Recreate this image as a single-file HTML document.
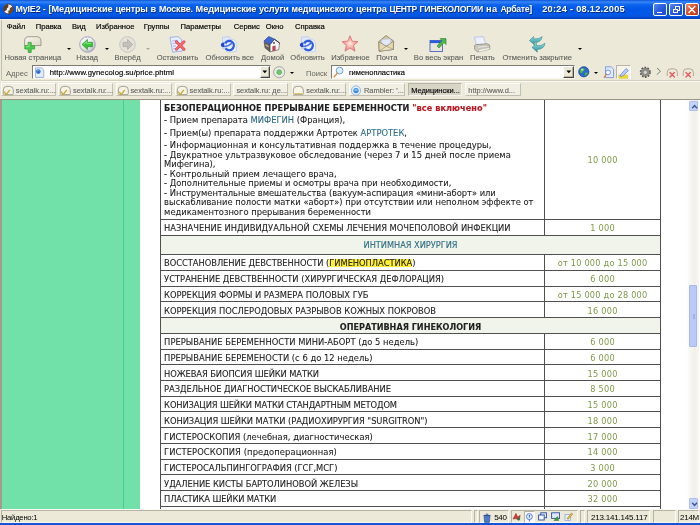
<!DOCTYPE html><html><head><meta charset="utf-8"><title>MyIE2</title><style>
html,body{margin:0;padding:0;}
body{width:700px;height:525px;overflow:hidden;background:#ece9d8;}
#win{filter:opacity(1);position:relative;width:700px;height:525px;overflow:hidden;background:#ece9d8;font-family:"Liberation Sans", sans-serif;font-size:7.6px;color:#000;}
#win div, #win span, #win svg{position:absolute;}
.t{white-space:nowrap;line-height:10px;height:10px;}
#title{left:0;top:0;width:700px;height:18.5px;background:linear-gradient(to bottom,#0a4fd0 0%,#2a78f0 6%,#2f80f5 13%,#0c64ec 25%,#0058e8 45%,#0358e6 78%,#0450da 90%,#0038b0 100%);}
#title .tt{left:15.4px;top:4.1px;font-weight:bold;font-size:9.2px;color:#fff;line-height:11px;height:11px;white-space:pre;text-shadow:0.7px 0.7px 0 #0a2a7a;font-family:"Liberation Sans",sans-serif;}
.wb{top:3px;height:12.6px;width:13.4px;border:0.8px solid #fff;border-radius:2px;box-sizing:border-box;background:linear-gradient(135deg,#5a8af0 0%,#2a5fe0 45%,#1c48c8 100%);}
.wb.x{background:linear-gradient(135deg,#f0906a 0%,#d8502a 45%,#b8381a 100%);}
.menu{top:21.5px;color:#000;font-size:7.6px;-webkit-text-stroke:0.18px #000;}
.lbl{top:53px;color:#5e5e5a;-webkit-text-stroke:0.1px #5e5e5a;text-align:center;font-size:7.6px;}
.arr{width:0;height:0;border-left:2px solid transparent;border-right:2px solid transparent;border-top:2.2px solid #000;}
.inp{background:#fff;border-top:1px solid #7b7b74;border-left:1px solid #7b7b74;border-bottom:1px solid #f6f5ee;border-right:1px solid #f6f5ee;box-sizing:border-box;}
.dd{background:#ece9d8;border:1px solid #fff;border-right-color:#48463e;border-bottom-color:#48463e;box-sizing:border-box;box-shadow:inset -0.8px -0.8px 0 #a8a594;}
.tab{top:83.4px;height:13px;box-sizing:border-box;background:#f1efe4;border-top:1px solid #fdfdfa;border-left:1px solid #fdfdfa;border-right:1px solid #c2bfae;border-bottom:1px solid #c2bfae;}
.tab.act{background:#d8d4c6;border-color:#b9b5a4 #f4f2ea #f4f2ea #b9b5a4;}
.tab .t{top:1.2px;color:#62625e;font-size:7.45px;-webkit-text-stroke:0.1px #62625e;}
.tab.act .t{color:#000;-webkit-text-stroke:0.15px #000;}
#content{left:0px;top:98.6px;width:700px;height:410.6px;background:#fff;overflow:hidden;border-top:1px solid #9c9586;border-left:2px solid #a39c8e;box-sizing:border-box;}
.hl{height:1px;background:#505050;left:159.7px;width:500px;}
.vl{width:1px;background:#505050;top:0;}
.c{font-family:"DejaVu Sans", "Liberation Sans", sans-serif;font-size:8.35px;white-space:nowrap;line-height:10px;height:10px;color:#202020;-webkit-text-stroke:0.08px #202020;}
.c b{font-size:8.2px;}
.p{font-family:"DejaVu Sans", "Liberation Sans", sans-serif;font-size:8.2px;white-space:nowrap;line-height:10px;height:10px;color:#80994a;left:542.6px;width:116px;text-align:center;letter-spacing:0.22px;}
.sp{top:510.2px;height:13.2px;border-left:1px solid #b6b3a2;border-top:1px solid #b6b3a2;border-right:1px solid #faf9f3;border-bottom:1px solid #faf9f3;box-sizing:border-box;}
</style></head><body><div id="win">
<div id="title">
<svg style="left:2.5px;top:3px" width="11" height="12" viewBox="0 0 11 12"><circle cx="5.3" cy="6" r="5" fill="#f4efe6" stroke="#3a2a1a" stroke-width="0.8"/><path d="M5.3 1 A5 5 0 0 0 1.2 8.5 L5.3 6 Z" fill="#5a3a20"/><path d="M5.3 11 A5 5 0 0 0 9.6 3.6 L5.3 6 Z" fill="#6a4a2a"/><circle cx="5.3" cy="6" r="1.6" fill="#fff"/></svg>
<div class="tt" id="tt0" style="left:15.4px;letter-spacing:-0.111px;font-size:8.9px">MyIE2 -</div>
<div class="tt" id="tt1" style="left:48.5px;letter-spacing:-0.044px;font-size:9.2px">[Медицинские</div>
<div class="tt" id="tt2" style="left:115.4px;letter-spacing:-0.135px;font-size:8.9px">центры</div>
<div class="tt" id="tt3" style="left:150.5px;letter-spacing:-0.056px;font-size:9.2px">в</div>
<div class="tt" id="tt4" style="left:158.9px;letter-spacing:-0.133px;font-size:8.9px">Москве.</div>
<div class="tt" id="tt5" style="left:195.6px;letter-spacing:-0.078px;font-size:9.2px">Медицинские</div>
<div class="tt" id="tt6" style="left:259.1px;letter-spacing:-0.116px;font-size:9.2px">услуги</div>
<div class="tt" id="tt7" style="left:291.5px;letter-spacing:-0.071px;font-size:8.9px">медицинского</div>
<div class="tt" id="tt8" style="left:356.0px;letter-spacing:-0.139px;font-size:9.2px">центра</div>
<div class="tt" id="tt9" style="left:389.5px;letter-spacing:-0.318px;font-size:8.5px">ЦЕНТР</div>
<div class="tt" id="tt10" style="left:419.6px;letter-spacing:-0.160px;font-size:8.7px">ГИНЕКОЛОГИИ</div>
<div class="tt" id="tt11" style="left:486.0px;letter-spacing:0.464px;font-size:9.2px">на</div>
<div class="tt" id="tt12" style="left:500.4px;letter-spacing:-0.338px;font-size:8.7px">Арбате]</div>
<div class="tt" id="tt13" style="left:542.2px;letter-spacing:0.286px;font-size:9.2px">20:24 - 08.12.2005</div>
<div class="wb" style="left:653.3px"><div style="left:3px;top:7.6px;width:4.6px;height:1.8px;background:#fff"></div></div>
<div class="wb" style="left:669.4px"><div style="left:4.6px;top:2.4px;width:4.6px;height:4.2px;border:0.9px solid #fff;border-top-width:1.4px;box-sizing:border-box"></div><div style="left:2.6px;top:4.6px;width:4.8px;height:4.4px;border:0.9px solid #fff;border-top-width:1.4px;box-sizing:border-box;background:#2a58d8"></div></div>
<div class="wb x" style="left:685.3px"><svg style="left:0;top:0" width="12" height="11" viewBox="0 0 12 11"><path d="M3 2.4 L8.8 8.4 M8.8 2.4 L3 8.4" stroke="#fff" stroke-width="1.5" stroke-linecap="round"/></svg></div>
</div>
<div style="left:0.8px;top:19.4px;width:0.9px;height:61.4px;background:#c2beae"></div>
<div style="left:0;top:18.5px;width:700px;height:1px;background:#f6f4ea"></div>
<div class="t menu" style="left:6.8px">Файл</div>
<div class="t menu" style="left:35.8px">Правка</div>
<div class="t menu" style="left:72px">Вид</div>
<div class="t menu" style="left:96px">Избранное</div>
<div class="t menu" style="left:143.8px">Группы</div>
<div class="t menu" style="left:180.6px">Параметры</div>
<div class="t menu" style="left:233.8px">Сервис</div>
<div class="t menu" style="left:265.8px">Окно</div>
<div class="t menu" style="left:295px">Справка</div>
<svg style="left:23.8px;top:35.5px" width="18" height="17" viewBox="0 0 18 17"><defs><linearGradient id="gnp" x1="0" y1="0" x2="1" y2="1"><stop offset="0" stop-color="#f8f6ee"/><stop offset="1" stop-color="#dcd7c4"/></linearGradient></defs><path d="M0.6 9.6 V5 Q0.6 0.7 5 0.7 H12.6 Q17 0.7 17 5 V9.6 Z" fill="url(#gnp)" stroke="#8e8a78" stroke-width="0.8"/><path d="M4.2 6.4 V9.8 H0.8 V13 H4.2 V16.4 H7.2 V13 H10.6 V9.8 H7.2 V6.4 Z" fill="#48cc48" stroke="#2c9a30" stroke-width="0.7" stroke-linejoin="round"/><path d="M5 7.6 V10.6 H2" fill="none" stroke="#9bea96" stroke-width="0.8"/></svg>
<div class="t lbl" style="left:-12.1px;width:90px">Новая страница</div>
<div class="arr" style="left:66.6px;top:47.8px;border-top-color:#000"></div>
<svg style="left:78.6px;top:35.6px" width="17" height="17" viewBox="0 0 17 17"><defs><radialGradient id="gb" cx="0.4" cy="0.35" r="0.7"><stop offset="0" stop-color="#fff"/><stop offset="0.6" stop-color="#e8e8e8"/><stop offset="1" stop-color="#a8a8b0"/></radialGradient></defs><circle cx="8.5" cy="8.5" r="7.8" fill="url(#gb)" stroke="#a4a4c4" stroke-width="1"/><path d="M3 8.5 L8.4 3.4 V6.3 H13.4 V10.7 H8.4 V13.6 Z" fill="#3ec43c" stroke="#249428" stroke-width="0.7" stroke-linejoin="round"/><path d="M4.6 8.3 L7.6 5.4 V7.4 H12" fill="none" stroke="#8fe88a" stroke-width="0.9"/></svg>
<div class="t lbl" style="left:42.2px;width:90px">Назад</div>
<div class="arr" style="left:104.9px;top:47.8px;border-top-color:#000"></div>
<svg style="left:118.8px;top:35.6px" width="17" height="17" viewBox="0 0 17 17"><circle cx="8.5" cy="8.5" r="7.8" fill="#e4e2da" stroke="#c4c2b8" stroke-width="0.9"/><path d="M13.8 8.5 L8.6 3.6 V6.4 H4 V10.6 H8.6 V13.4 Z" fill="#c2c0b8" stroke="#aaa89e" stroke-width="0.7"/></svg>
<div class="t lbl" style="left:82.6px;width:90px">Вперёд</div>
<div class="arr" style="left:146.0px;top:47.5px;border-top-color:#aaa79a"></div>
<svg style="left:169.0px;top:35.5px" width="18" height="17" viewBox="0 0 18 17"><path d="M1 1.4 L9 0.6 L12.6 3.6 L13.4 15 L3.6 16.2 Z" fill="#e6edfc" stroke="#8ea6e4" stroke-width="0.8"/><path d="M3 5 L9 4.4 M3.4 7.6 L8 7.2 M3.8 10.2 L7 9.9 M4 12.8 L8 12.4" stroke="#9ab2ec" stroke-width="0.8"/><path d="M7.4 5.8 L15 13.2 M15 5.8 L7.4 13.2" stroke="#d84858" stroke-width="3" stroke-linecap="round"/><path d="M7.4 5.8 L15 13.2 M15 5.8 L7.4 13.2" stroke="#f46a6a" stroke-width="1.7" stroke-linecap="round"/></svg>
<div class="t lbl" style="left:132.4px;width:90px">Остановить</div>
<svg style="left:220.4px;top:35.5px" width="18" height="17" viewBox="0 0 18 17"><path d="M2.4 1.2 L9 0.6 L11.4 3 L11.4 12 L2.4 12.6 Z" fill="#dde6fb" stroke="#a9bdf0" stroke-width="0.6"/><path d="M6.6 4 L13.6 3.4 L16.4 6 L16.4 15.6 L6.6 16.2 Z" fill="#eaf0fe" stroke="#b4c6f2" stroke-width="0.6"/><circle cx="9.2" cy="9.6" r="4.6" fill="none" stroke="#2f5bdc" stroke-width="2.3" stroke-dasharray="23 6" transform="rotate(-150 9.2 9.6)"/><path d="M0.8 9.6 Q0.8 6.2 4.6 6.6 Q3.6 8.8 5 10.8 Q2.2 12.2 0.8 9.6 Z" fill="#2446cc"/><path d="M4.4 10.6 Q8.6 10.4 12.6 6.6" fill="none" stroke="#4d78ea" stroke-width="1.5"/></svg>
<div class="t lbl" style="left:184.8px;width:90px">Обновить все</div>
<svg style="left:263.0px;top:35.5px" width="18" height="17" viewBox="0 0 18 17"><path d="M1.1 5.7 L7.1 8.8 L7.1 15.9 L2 11.9 Z" fill="#6a6258" stroke="#3a3630" stroke-width="0.5"/><path d="M11.4 3.4 L16.6 7.1 L15.7 13.7 L7.1 15.9 L7.1 8.5 Z" fill="#fbfaf6" stroke="#4a463e" stroke-width="0.6"/><path d="M0.9 5.1 L5.7 0.4 L11.4 3.1 L7.1 8.5 Z" fill="#3f68d2" stroke="#2a3f8e" stroke-width="0.6"/><path d="M11.4 3.1 L16.8 7.2" stroke="#2a2f48" stroke-width="1"/><path d="M9.4 10.2 L12.6 9.6 L12.6 14.4 L9.4 15.2 Z" fill="#c2405a"/><rect x="10.2" y="6.2" width="1.6" height="1.5" fill="#2a2a30"/><path d="M2.6 8 L5.6 9.8 L5.6 11.6 L2.6 9.8 Z" fill="#b8b4a4"/></svg>
<div class="t lbl" style="left:227.6px;width:90px">Домой</div>
<svg style="left:299.0px;top:35.5px" width="18" height="17" viewBox="0 0 18 17"><path d="M2.4 1.2 L9 0.6 L11.4 3 L11.4 12 L2.4 12.6 Z" fill="#dde6fb" stroke="#a9bdf0" stroke-width="0.6"/><path d="M6.6 4 L13.6 3.4 L16.4 6 L16.4 15.6 L6.6 16.2 Z" fill="#eaf0fe" stroke="#b4c6f2" stroke-width="0.6"/><circle cx="9.2" cy="9.6" r="4.6" fill="none" stroke="#2f5bdc" stroke-width="2.3" stroke-dasharray="23 6" transform="rotate(-150 9.2 9.6)"/><path d="M0.8 9.6 Q0.8 6.2 4.6 6.6 Q3.6 8.8 5 10.8 Q2.2 12.2 0.8 9.6 Z" fill="#2446cc"/><path d="M4.4 10.6 Q8.6 10.4 12.6 6.6" fill="none" stroke="#4d78ea" stroke-width="1.5"/></svg>
<div class="t lbl" style="left:262.5px;width:90px">Обновить</div>
<svg style="left:341.4px;top:35.4px" width="18" height="17" viewBox="0 0 18 17"><defs><radialGradient id="gst" cx="0.5" cy="0.5" r="0.55"><stop offset="0" stop-color="#fdeee6"/><stop offset="0.45" stop-color="#f6b4aa"/><stop offset="1" stop-color="#ea7c80"/></radialGradient></defs><path d="M9 0.8 L11.3 6.2 L17 6.6 L12.6 10.4 L14 16.2 L9 13.1 L4 16.2 L5.4 10.4 L1 6.6 L6.7 6.2 Z" fill="url(#gst)" stroke="#e27880" stroke-width="0.9" stroke-linejoin="round"/></svg>
<div class="t lbl" style="left:305.5px;width:90px">Избранное</div>
<svg style="left:377.5px;top:35.4px" width="18" height="17" viewBox="0 0 18 17"><path d="M0.8 6.6 L8 0.5 L15.6 6 L15.4 14.4 L1.2 16.2 Z" fill="#d6c9a0" stroke="#857c64" stroke-width="0.8" stroke-linejoin="round"/><path d="M3.6 4.6 L12.6 3.8 L13 10 L4 10.6 Z" fill="#e2e8fc" stroke="#a8b6e4" stroke-width="0.5"/><path d="M0.9 6.8 L8.4 11.4 L15.5 6.2 L15.4 14.4 L1.2 16.2 Z" fill="#e6d8b0" stroke="#857c64" stroke-width="0.7" stroke-linejoin="round"/><path d="M1.2 16.2 L8.4 11.4 L15.4 14.4 Z" fill="#f0e4c6" stroke="#857c64" stroke-width="0.5"/></svg>
<div class="t lbl" style="left:341.9px;width:90px">Почта</div>
<div class="arr" style="left:404.0px;top:47.8px;border-top-color:#000"></div>
<svg style="left:428.6px;top:35.5px" width="18" height="17" viewBox="0 0 18 17"><rect x="1" y="4.5" width="12.5" height="11" fill="#e8e6dc" stroke="#4a66b8" stroke-width="0.9"/><rect x="1" y="4.5" width="12.5" height="2.6" fill="#2a5ad8"/><path d="M8 10 L13 4.6 L11 2.6 H17 V8.6 L15 6.6 L10 12 Z" fill="#4cb84a" stroke="#2a7a2e" stroke-width="0.6"/></svg>
<div class="t lbl" style="left:393.5px;width:90px">Во весь экран</div>
<svg style="left:473.2px;top:35.5px" width="18" height="17" viewBox="0 0 18 17"><path d="M1.1 1.1 L10.5 0.5 L13.1 8.2 L3.1 8.8 Z" fill="#dfe3fb" stroke="#b4bce4" stroke-width="0.6"/><path d="M3.2 2.4 L9.6 2 L11.6 7.4 L4.6 7.8 Z" fill="#eef1ff"/><path d="M1.6 9.4 L3.4 8.6 L14.2 7.8 L16.6 9 L16.8 13 L4.6 15.8 L1.8 13.6 Z" fill="#d0cfbf" stroke="#7e7d6c" stroke-width="0.7" stroke-linejoin="round"/><path d="M4.4 10.4 L14.8 9.4 L14.8 11 L4.6 12.2 Z" fill="#eef0f6" stroke="#9a9a8c" stroke-width="0.4"/><path d="M5.2 13.8 L16 11.6 L17 13.2 L6.4 16 Z" fill="#f8f8f4" stroke="#a6a596" stroke-width="0.5"/></svg>
<div class="t lbl" style="left:437.4px;width:90px">Печать</div>
<svg style="left:528.6px;top:35.5px" width="18" height="17" viewBox="0 0 18 17"><defs><linearGradient id="gun" x1="0" y1="0" x2="0" y2="1"><stop offset="0" stop-color="#8adada"/><stop offset="1" stop-color="#2e8e9a"/></linearGradient></defs><path d="M0.4 4.6 L4.6 0.4 L4.8 2.8 Q10 3.4 13.2 0.6 Q12.6 6.4 5.2 6.8 L5.6 9 Z" fill="url(#gun)" stroke="#2a8088" stroke-width="0.5"/><path d="M3 11.4 L7.4 7.2 L7.6 9.6 Q12.6 10.2 16 7.2 Q15.4 13.2 8 13.6 L8.4 16.2 Z" fill="url(#gun)" stroke="#2a8088" stroke-width="0.5"/></svg>
<div class="t lbl" style="left:492.2px;width:90px">Отменить закрытие</div>
<div class="arr" style="left:578.0px;top:47.8px;border-top-color:#000"></div>
<div class="t" style="left:6px;top:69.2px;color:#66665f">Адрес</div>
<div class="inp" style="left:32.2px;top:65.2px;width:238.6px;height:13.6px"></div>
<svg style="left:33.6px;top:66.6px" width="11" height="11" viewBox="0 0 11 11"><path d="M1.5 0.8 H7.5 L9.8 3 V10.4 H1.5 Z" fill="#e6eefc" stroke="#7a96d8" stroke-width="0.7"/><circle cx="4.3" cy="4.6" r="2.3" fill="#2a6ad8"/><path d="M3 4 Q4.3 2.8 5.6 4" stroke="#9cf" stroke-width="0.7" fill="none"/></svg>
<div class="t" id="url" style="left:49.7px;top:67.8px;font-size:7.7px;color:#000;-webkit-text-stroke:0.15px #000;letter-spacing:0.047px">http://www.gynecolog.su/price.phtml</div>
<div class="dd" style="left:259.6px;top:66.2px;width:10.4px;height:11.6px"><svg style="left:1.4px;top:3.2px" width="6" height="4" viewBox="0 0 6 4"><path d="M0.4 0.4 H5.2 L2.8 3.2 Z" fill="#000"/></svg></div>
<svg style="left:273.4px;top:66.2px" width="12.4" height="12.4" viewBox="0 0 12.4 12.4"><circle cx="6.2" cy="6.2" r="5.6" fill="#e8e8e4" stroke="#a2a29c" stroke-width="0.9"/><circle cx="6.2" cy="6.2" r="2.4" fill="#6cc868" stroke="#4aa44c" stroke-width="0.6"/></svg>
<div class="arr" style="left:290.2px;top:71.6px;border-top-color:#000"></div>
<div class="t" style="left:306px;top:69.2px;color:#66665f">Поиск</div>
<div class="inp" style="left:331.4px;top:65.2px;width:243.2px;height:13.6px"></div>
<svg style="left:333.0px;top:66.4px" width="12" height="12" viewBox="0 0 12 12"><circle cx="6.6" cy="4.6" r="3.4" fill="#dff0fc" stroke="#6aa4e0" stroke-width="1"/><path d="M4.2 7.2 L1.2 10.8" stroke="#d89a4a" stroke-width="1.6" stroke-linecap="round"/></svg>
<div class="t" id="srch" style="left:348.9px;top:68px;font-size:7.5px;color:#000;-webkit-text-stroke:0.15px #000;letter-spacing:-0.012px">гименопластика</div>
<div class="dd" style="left:563.4px;top:66.2px;width:10.4px;height:11.6px"><svg style="left:1.4px;top:3.2px" width="6" height="4" viewBox="0 0 6 4"><path d="M0.4 0.4 H5.2 L2.8 3.2 Z" fill="#000"/></svg></div>
<svg style="left:578.0px;top:66.4px" width="11.6" height="11.6" viewBox="0 0 11.6 11.6"><circle cx="5.8" cy="5.8" r="5.1" fill="#2a6ad0" stroke="#1a3a8a" stroke-width="0.7"/><path d="M2 4 Q4 1.6 6.4 2.6 Q7 4.6 5 5.6 Q4 7.6 2.4 7 Z" fill="#4cb84a"/><path d="M7 6.6 Q9.4 6 9.8 7.6 Q8.6 9.8 6.8 9.6 Z" fill="#4cb84a"/><circle cx="4.2" cy="3.6" r="1.2" fill="#fff" opacity="0.55"/></svg>
<div class="arr" style="left:594.3px;top:71.6px;border-top-color:#000"></div>
<svg style="left:602.6px;top:66.4px" width="12" height="13" viewBox="0 0 12 13"><path d="M2.5 0.8 H8.2 L10.6 3.2 V11.6 H2.5 Z" fill="#dfe9fc" stroke="#6a8ad8" stroke-width="0.8"/><circle cx="5" cy="6.4" r="2.4" fill="#f4f8ff" stroke="#5a7ad0" stroke-width="0.8"/><path d="M3.4 8.4 L1.2 11.2" stroke="#d8823a" stroke-width="1.3" stroke-linecap="round"/></svg>
<div style="left:616.2px;top:65px;width:15px;height:14.4px;background:#f6f4ec;border:1px solid #b8b5a4;border-right-color:#fff;border-bottom-color:#fff;box-sizing:border-box"></div>
<svg style="left:618.4px;top:66.6px" width="12" height="12" viewBox="0 0 12 12"><path d="M0.8 8 H9.6 V11.4 H0.8 Z" fill="#f0dc2a" stroke="#c8b020" stroke-width="0.4"/><path d="M2.6 7.6 L8 1.6 L10.4 3.6 L5 9 L2.4 9.4 Z" fill="#b9ccf6" stroke="#6884d2" stroke-width="0.7"/></svg>
<svg style="left:638.6px;top:66.2px" width="12.6" height="12.6" viewBox="0 0 12.6 12.6"><circle cx="6.3" cy="6.3" r="4.6" fill="#8a8a86" stroke="#5a5a58" stroke-width="2" stroke-dasharray="1.6 1.3"/><circle cx="6.3" cy="6.3" r="4" fill="#8e8e8a"/><circle cx="6.3" cy="6.3" r="1.6" fill="#d8d6cc"/></svg>
<svg style="left:655.6px;top:67.4px" width="6" height="9" viewBox="0 0 6 9"><path d="M1 1 L4.4 4.2 L1 7.6" fill="none" stroke="#7a786c" stroke-width="1"/></svg>
<svg style="left:666.4px;top:67.0px" width="12.6" height="12" viewBox="0 0 12.6 12"><path d="M1.2 9 V5.4 Q1.2 1.8 5 1.8 H7.6 Q11.4 1.8 11.4 5.4 V9" fill="#efe6d6" stroke="#aaa592" stroke-width="0.9"/><path d="M4 5.6 L8.4 10 M8.4 5.6 L4 10" stroke="#e05c60" stroke-width="1.35" stroke-linecap="round"/></svg>
<svg style="left:681.8px;top:67.0px" width="12.6" height="12" viewBox="0 0 12.6 12"><path d="M1.2 9 V5.4 Q1.2 1.8 5 1.8 H7.6 Q11.4 1.8 11.4 5.4 V9" fill="#efe6d6" stroke="#aaa592" stroke-width="0.9"/><path d="M4 5.6 L8.4 10 M8.4 5.6 L4 10" stroke="#e05c60" stroke-width="1.35" stroke-linecap="round"/></svg>
<div style="left:1px;top:80.4px;width:699px;height:1px;background:#d2cfbf"></div>
<div style="left:1px;top:81.4px;width:699px;height:1px;background:#fbfaf5"></div>
<div class="tab" style="left:1.2px;width:54.6px">
<svg style="left:-0.2px;top:0.6px" width="12" height="11" viewBox="0 0 12 11"><path d="M1.3 8.6 V5 Q1.3 1.4 4.9 1.4 H7.7 Q11.3 1.4 11.3 5 V8.6 Q11.3 9.6 10.3 9.6 H2.3 Q1.3 9.6 1.3 8.6 Z" fill="#f6f3e6" stroke="#9c9988" stroke-width="0.9"/><path d="M2.2 6.6 L4.2 9.6 L7.8 4.8" fill="none" stroke="#c9aa3c" stroke-width="1.4"/></svg>
<div class="t" style="left:13.6px">sextalk.ru:...</div>
</div>
<div class="tab" style="left:58.4px;width:54.8px">
<svg style="left:-0.2px;top:0.6px" width="12" height="11" viewBox="0 0 12 11"><path d="M1.3 8.6 V5 Q1.3 1.4 4.9 1.4 H7.7 Q11.3 1.4 11.3 5 V8.6 Q11.3 9.6 10.3 9.6 H2.3 Q1.3 9.6 1.3 8.6 Z" fill="#f6f3e6" stroke="#9c9988" stroke-width="0.9"/><path d="M2.2 6.6 L4.2 9.6 L7.8 4.8" fill="none" stroke="#c9aa3c" stroke-width="1.4"/></svg>
<div class="t" style="left:13.6px">sextalk.ru:...</div>
</div>
<div class="tab" style="left:115.8px;width:56.2px">
<svg style="left:-0.2px;top:0.6px" width="12" height="11" viewBox="0 0 12 11"><path d="M1.3 8.6 V5 Q1.3 1.4 4.9 1.4 H7.7 Q11.3 1.4 11.3 5 V8.6 Q11.3 9.6 10.3 9.6 H2.3 Q1.3 9.6 1.3 8.6 Z" fill="#f6f3e6" stroke="#9c9988" stroke-width="0.9"/><path d="M2.2 6.6 L4.2 9.6 L7.8 4.8" fill="none" stroke="#c9aa3c" stroke-width="1.4"/></svg>
<div class="t" style="left:13.6px">sextalk.ru:...</div>
</div>
<div class="tab" style="left:175.0px;width:55.6px">
<svg style="left:-0.2px;top:0.6px" width="12" height="11" viewBox="0 0 12 11"><path d="M1.3 8.6 V5 Q1.3 1.4 4.9 1.4 H7.7 Q11.3 1.4 11.3 5 V8.6 Q11.3 9.6 10.3 9.6 H2.3 Q1.3 9.6 1.3 8.6 Z" fill="#f6f3e6" stroke="#9c9988" stroke-width="0.9"/><path d="M2.2 6.6 L4.2 9.6 L7.8 4.8" fill="none" stroke="#c9aa3c" stroke-width="1.4"/></svg>
<div class="t" style="left:13.6px">sextalk.ru:...</div>
</div>
<div class="tab" style="left:232.9px;width:55.5px">
<div class="t" style="left:2.5px">sextalk.ru: де...</div>
</div>
<div class="tab" style="left:291.6px;width:54.8px">
<svg style="left:-0.2px;top:0.6px" width="12" height="11" viewBox="0 0 12 11"><path d="M1.3 8.6 V5 Q1.3 1.4 4.9 1.4 H7.7 Q11.3 1.4 11.3 5 V8.6 Q11.3 9.6 10.3 9.6 H2.3 Q1.3 9.6 1.3 8.6 Z" fill="#f8f5e8" stroke="#9c9988" stroke-width="0.9"/><path d="M2.2 8.6 H10.4" stroke="#dcc66a" stroke-width="1.2"/></svg>
<div class="t" style="left:13.6px">sextalk.ru:...</div>
</div>
<div class="tab" style="left:349.4px;width:55.3px">
<svg style="left:-0.2px;top:0.6px" width="12" height="11" viewBox="0 0 12 11"><circle cx="6" cy="5.6" r="4.6" fill="#eaf2fc" stroke="#8ab0e0" stroke-width="0.9"/><circle cx="6" cy="5.6" r="2.7" fill="#3a8ae0"/><path d="M4.4 5 H7.6" stroke="#cfe6ff" stroke-width="1"/></svg>
<div class="t" style="left:13.6px">Rambler: '...</div>
</div>
<div class="tab act" style="left:407.7px;width:54.1px">
<div class="t" style="left:2.5px">Медицински...</div>
</div>
<div class="tab" style="left:464.8px;width:56.2px">
<div class="t" style="left:2.5px">http://www.d...</div>
</div>
<div id="content">
<div style="left:0;top:0;width:138.2px;height:420px;background:#72e1a9"></div>
<div style="left:120.8px;top:0;width:1px;height:420px;background:#45d08f"></div>
<div style="left:159.0px;top:136.4px;width:499.5px;height:18.4px;background:#f0f4ea"></div>
<div style="left:159.0px;top:218.8px;width:499.5px;height:15.0px;background:#f0f4ea"></div>
<div class="hl" style="top:119.1px;left:158.4px;width:500.4px"></div>
<div class="hl" style="top:135.0px;left:158.4px;width:500.4px"></div>
<div class="hl" style="top:154.2px;left:158.4px;width:500.4px"></div>
<div class="hl" style="top:170.3px;left:158.4px;width:500.4px"></div>
<div class="hl" style="top:186.1px;left:158.4px;width:500.4px"></div>
<div class="hl" style="top:201.9px;left:158.4px;width:500.4px"></div>
<div class="hl" style="top:217.5px;left:158.4px;width:500.4px"></div>
<div class="hl" style="top:233.2px;left:158.4px;width:500.4px"></div>
<div class="hl" style="top:249.1px;left:158.4px;width:500.4px"></div>
<div class="hl" style="top:264.9px;left:158.4px;width:500.4px"></div>
<div class="hl" style="top:280.5px;left:158.4px;width:500.4px"></div>
<div class="hl" style="top:296.2px;left:158.4px;width:500.4px"></div>
<div class="hl" style="top:311.9px;left:158.4px;width:500.4px"></div>
<div class="hl" style="top:327.7px;left:158.4px;width:500.4px"></div>
<div class="hl" style="top:343.4px;left:158.4px;width:500.4px"></div>
<div class="hl" style="top:359.1px;left:158.4px;width:500.4px"></div>
<div class="hl" style="top:374.9px;left:158.4px;width:500.4px"></div>
<div class="hl" style="top:390.6px;left:158.4px;width:500.4px"></div>
<div class="hl" style="top:406.3px;left:158.4px;width:500.4px"></div>
<div class="vl" style="left:158.4px;height:412.4px"></div>
<div class="vl" style="left:658.0px;height:412.4px"></div>
<div class="vl" style="left:542.0px;top:-0.6px;height:136.1px"></div>
<div class="vl" style="left:542.0px;top:154.7px;height:63.3px"></div>
<div class="vl" style="left:542.0px;top:233.7px;height:178.7px"></div>
<div class="c" id="c1" style="left:162.1px;top:3.3px;letter-spacing:0.038px;"><b>БЕЗОПЕРАЦИОННОЕ ПРЕРЫВАНИЕ БЕРЕМЕННОСТИ <span style="position:static;color:#c8141e">"все включено"</span></b></div>
<div class="c" id="c2" style="left:162.1px;top:15.5px;letter-spacing:0.011px;">- Прием препарата <span style="position:static;color:#2a7a9a">МИФЕГИН</span> (Франция),</div>
<div class="c" id="c3" style="left:162.1px;top:28.8px;letter-spacing:0.001px;">- Прием(ы) препарата поддержки Артротек <span style="position:static;color:#2a7a9a">АРТРОТЕК</span>,</div>
<div class="c" id="c4" style="left:162.1px;top:40.3px;letter-spacing:0.049px;">- Информационная и консультативная поддержка в течение процедуры,</div>
<div class="c" id="c5" style="left:162.1px;top:50.4px;letter-spacing:0.040px;">- Двукратное ультразвуковое обследование (через 7 и 15 дней после приема</div>
<div class="c" id="c6" style="left:162.1px;top:59.9px;letter-spacing:0.023px;">Мифегина),</div>
<div class="c" id="c7" style="left:162.1px;top:69.4px;letter-spacing:0.023px;">- Контрольный прием лечащего врача,</div>
<div class="c" id="c8" style="left:162.1px;top:78.8px;letter-spacing:-0.003px;">- Дополнительные приемы и осмотры врача при необходимости,</div>
<div class="c" id="c9" style="left:162.1px;top:88.2px;letter-spacing:-0.018px;">- Инструментальные вмешательства (вакуум-аспирация «мини-аборт» или</div>
<div class="c" id="c10" style="left:162.1px;top:97.7px;letter-spacing:0.020px;">выскабливание полости матки «аборт») при отсутствии или неполном эффекте от</div>
<div class="c" id="c11" style="left:162.1px;top:107.1px;letter-spacing:0.019px;">медикаментозного прерывания беременности</div>
<div class="p" style="top:55.8px">10 000</div>
<div class="c" id="c12" style="left:162.1px;top:123.6px;letter-spacing:-0.027px;">НАЗНАЧЕНИЕ ИНДИВИДУАЛЬНОЙ СХЕМЫ ЛЕЧЕНИЯ МОЧЕПОЛОВОЙ ИНФЕКЦИИ</div>
<div class="p" style="top:123.6px">1 000</div>
<div class="c" id="c13" style="left:162.1px;top:158.7px;letter-spacing:-0.058px;">ВОССТАНОВЛЕНИЕ ДЕВСТВЕННОСТИ (<span style="position:static;background:linear-gradient(to bottom,transparent 14%,#ffef38 14%,#ffef38 88%,transparent 88%)">ГИМЕНОПЛАСТИКА</span>)</div>
<div class="p" style="top:158.7px">от 10 000 до 15 000</div>
<div class="c" id="c14" style="left:162.1px;top:174.6px;letter-spacing:-0.000px;">УСТРАНЕНИЕ ДЕВСТВЕННОСТИ (ХИРУРГИЧЕСКАЯ ДЕФЛОРАЦИЯ)</div>
<div class="p" style="top:174.6px">6 000</div>
<div class="c" id="c15" style="left:162.1px;top:190.4px;letter-spacing:-0.008px;">КОРРЕКЦИЯ ФОРМЫ И РАЗМЕРА ПОЛОВЫХ ГУБ</div>
<div class="p" style="top:190.4px">от 15 000 до 28 000</div>
<div class="c" id="c16" style="left:162.1px;top:206.1px;letter-spacing:-0.008px;">КОРРЕКЦИЯ ПОСЛЕРОДОВЫХ РАЗРЫВОВ КОЖНЫХ ПОКРОВОВ</div>
<div class="p" style="top:206.1px">16 000</div>
<div class="c" id="c17" style="left:162.1px;top:237.6px;letter-spacing:0.024px;">ПРЕРЫВАНИЕ БЕРЕМЕННОСТИ МИНИ-АБОРТ (до 5 недель)</div>
<div class="p" style="top:237.6px">6 000</div>
<div class="c" id="c18" style="left:162.1px;top:253.4px;letter-spacing:0.021px;">ПРЕРЫВАНИЕ БЕРЕМЕНОСТИ (с 6 до 12 недель)</div>
<div class="p" style="top:253.4px">6 000</div>
<div class="c" id="c19" style="left:162.1px;top:269.1px;letter-spacing:-0.109px;">НОЖЕВАЯ БИОПСИЯ ШЕЙКИ МАТКИ</div>
<div class="p" style="top:269.1px">15 000</div>
<div class="c" id="c20" style="left:162.1px;top:284.8px;letter-spacing:-0.066px;">РАЗДЕЛЬНОЕ ДИАГНОСТИЧЕСКОЕ ВЫСКАБЛИВАНИЕ</div>
<div class="p" style="top:284.8px">8 500</div>
<div class="c" id="c21" style="left:162.1px;top:300.5px;letter-spacing:-0.139px;">КОНИЗАЦИЯ ШЕЙКИ МАТКИ СТАНДАРТНЫМ МЕТОДОМ</div>
<div class="p" style="top:300.5px">15 000</div>
<div class="c" id="c22" style="left:162.1px;top:316.2px;letter-spacing:-0.061px;">КОНИЗАЦИЯ ШЕЙКИ МАТКИ (РАДИОХИРУРГИЯ "SURGITRON")</div>
<div class="p" style="top:316.2px">18 000</div>
<div class="c" id="c23" style="left:162.1px;top:332.0px;letter-spacing:0.033px;">ГИСТЕРОСКОПИЯ (лечебная, диагностическая)</div>
<div class="p" style="top:332.0px">17 000</div>
<div class="c" id="c24" style="left:162.1px;top:347.7px;letter-spacing:0.089px;">ГИСТЕРОСКОПИЯ (предоперационная)</div>
<div class="p" style="top:347.7px">14 000</div>
<div class="c" id="c25" style="left:162.1px;top:363.4px;letter-spacing:-0.025px;">ГИСТЕРОСАЛЬПИНГОГРАФИЯ (ГСГ,МСГ)</div>
<div class="p" style="top:363.4px">3 000</div>
<div class="c" id="c26" style="left:162.1px;top:379.2px;letter-spacing:-0.050px;">УДАЛЕНИЕ КИСТЫ БАРТОЛИНОВОЙ ЖЕЛЕЗЫ</div>
<div class="p" style="top:379.2px">20 000</div>
<div class="c" id="c27" style="left:162.1px;top:394.9px;letter-spacing:-0.152px;">ПЛАСТИКА ШЕЙКИ МАТКИ</div>
<div class="p" style="top:394.9px">32 000</div>
<div class="c" style="left:159.0px;top:140.8px;width:499px;text-align:center;font-size:8.2px;color:#2a7a9a">ИНТИМНАЯ ХИРУРГИЯ</div>
<div class="c" style="left:159.0px;top:222.3px;width:499px;text-align:center;font-weight:bold;font-size:8.1px">ОПЕРАТИВНАЯ ГИНЕКОЛОГИЯ</div>
<div style="left:685.2px;top:0;width:12px;height:420px;background:linear-gradient(to right,#fdfdfb,#f1f0e9 60%,#f7f6f1)"></div>
<div style="left:686.6px;top:1.4px;width:9.8px;height:10.4px;background:#c3d3fb;border:0.6px solid #aebff0;box-sizing:border-box;border-radius:1px">
<svg style="left:0;top:0" width="9.4" height="10" viewBox="0 0 9.4 10"><path d="M2.2 6.2 L4.6 3.6 L7 6.2" fill="none" stroke="#3f5898" stroke-width="1.5"/></svg></div>
<div style="left:686.6px;top:398.8px;width:9.8px;height:10.4px;background:#c3d3fb;border:0.6px solid #aebff0;box-sizing:border-box;border-radius:1px">
<svg style="left:0;top:0" width="9.4" height="10" viewBox="0 0 9.4 10"><path d="M2.2 3.8 L4.6 6.4 L7 3.8" fill="none" stroke="#3f5898" stroke-width="1.5"/></svg></div>
<div style="left:686.9px;top:185.5px;width:8.6px;height:62px;background:#b9c9f9;border:0.6px solid #a6b8ee;border-radius:1px;box-sizing:border-box"><div style="left:3px;top:28px;width:2.4px;height:5px;background:#a0b4e4"></div></div>
</div>
<div style="left:1px;top:509.2px;width:699px;height:1px;background:#fbfaf5"></div>
<div class="t" id="sfound" style="left:1.8px;top:513.1px;color:#000;font-size:7.7px;letter-spacing:-0.259px">Найдено:1</div>
<div class="sp" style="left:1.0px;width:471.0px"></div>
<div class="sp" style="left:473.8px;width:3.8px"></div>
<div class="sp" style="left:479.4px;width:29.4px"></div>
<div class="sp" style="left:510.6px;width:67.4px"></div>
<div class="sp" style="left:580.0px;width:5.0px"></div>
<div class="sp" style="left:587.0px;width:63.4px"></div>
<div class="sp" style="left:652.6px;width:23.6px"></div>
<div class="sp" style="left:678.4px;width:20.2px"></div>
<svg style="left:483.4px;top:512.6px" width="8" height="10" viewBox="0 0 8 10"><path d="M1 2.6 H7 L6.4 9.4 H1.6 Z" fill="#4a7ac8" stroke="#2a4a8a" stroke-width="0.6"/><path d="M0.6 2.4 H7.4 M2.8 1.2 H5.2" stroke="#2a4a8a" stroke-width="0.9"/></svg>
<div class="t" id="s540" style="top:513.2px;font-size:8px;left:494.2px;letter-spacing:-0.353px">540</div>
<svg style="left:512.0px;top:512.4px" width="9" height="9" viewBox="0 0 9 9"><path d="M1 7 L4 1.4 L5.6 5 L8.2 3.4 L7 8 L3.8 6.6 Z" fill="#d83a3a" stroke="#8a1a1a" stroke-width="0.5"/><circle cx="6.6" cy="6.8" r="1.6" fill="#3a7a3a"/></svg>
<div style="left:523.6px;top:511.4px;width:11.2px;height:11.4px;background:#fbfaf6;border:1px solid #b8b5a4;border-right-color:#fff;border-bottom-color:#fff;box-sizing:border-box"></div>
<svg style="left:525.0px;top:512.6px" width="9" height="9" viewBox="0 0 9 9"><circle cx="4.4" cy="3.6" r="3" fill="#dfeafc" stroke="#4a7ad0" stroke-width="0.9"/><path d="M4.4 6.6 V8.6" stroke="#4a7ad0" stroke-width="1"/><path d="M4.4 2 V4.4" stroke="#2a4aa0" stroke-width="0.9"/></svg>
<svg style="left:537.6px;top:512.4px" width="9" height="9" viewBox="0 0 9 9"><rect x="2.8" y="0.8" width="5.6" height="5" fill="#dfe8fc" stroke="#2a4aa0" stroke-width="0.9"/><rect x="0.6" y="3" width="5.6" height="5" fill="#f4f8ff" stroke="#2a4aa0" stroke-width="0.9"/></svg>
<svg style="left:551.0px;top:512.4px" width="9.4" height="9" viewBox="0 0 9.4 9"><rect x="0.6" y="0.8" width="8" height="5.6" fill="#dfe8fc" stroke="#2a4aa0" stroke-width="0.9"/><path d="M3 8.6 L6.4 4.6 L7.6 8.6 Z" fill="#3aa83a" stroke="#1a6a1e" stroke-width="0.5"/></svg>
<svg style="left:564.0px;top:512.4px" width="9.4" height="9" viewBox="0 0 9.4 9"><rect x="1" y="2.6" width="5.6" height="6" fill="#eaf0fc" stroke="#8aa0d8" stroke-width="0.7"/><path d="M3 6.4 L7.6 1 L8.8 2 L4.2 7.4 Z" fill="#e8c83a" stroke="#8a6a1a" stroke-width="0.5"/></svg>
<div class="t" id="sip" style="top:513.2px;font-size:8px;left:591px;letter-spacing:-0.205px">213.141.145.117</div>
<div class="t" id="smem" style="top:513.2px;font-size:8px;left:680px;letter-spacing:-0.254px">214M</div>
<div style="left:0;top:523.4px;width:700px;height:2px;background:#1553d6"></div>
</div></body></html>
